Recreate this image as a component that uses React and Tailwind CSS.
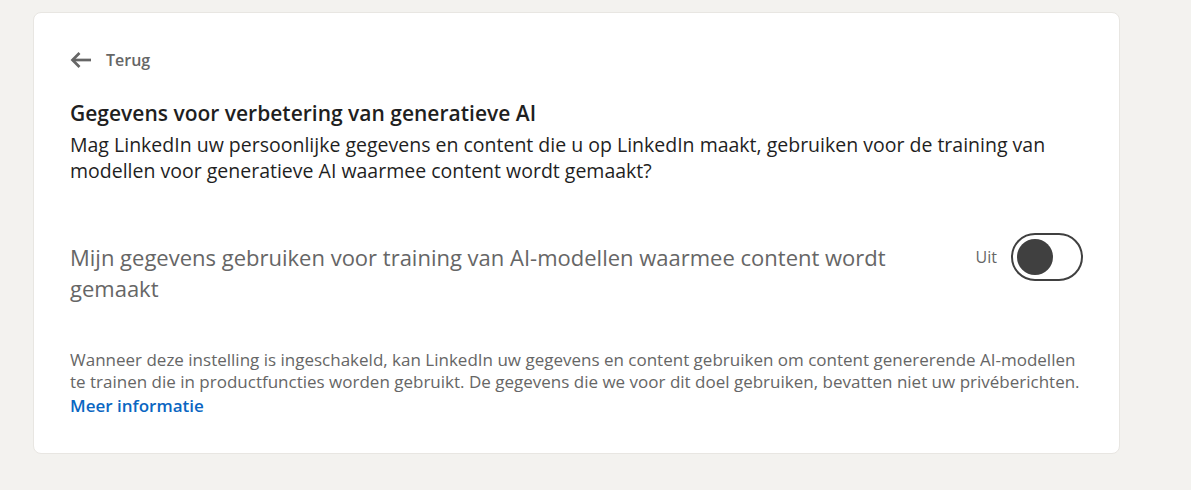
export default function App() {
    return (
        <div className="min-h-[490px] w-[1191px] bg-[#f3f2ef] pt-3 pl-[33px]" style={{ fontFamily: '"Open Sans", sans-serif' }}>
            <div className="w-[1087px] rounded-lg border border-[#e8e6e2] bg-white px-9 pt-[35px] pb-[34px]">
                <button className="flex items-center gap-[14px] text-[16px] font-semibold leading-6 text-[#666666]">
                    <svg width="22" height="18" viewBox="0 0 22 18" fill="none" stroke="#666666" strokeWidth="2.7" strokeLinejoin="miter">
                        <path d="M2.5 9 H21" />
                        <path d="M9.5 2 L2.5 9 L9.5 16" />
                    </svg>
                    Terug
                </button>

                <h2 className="mt-[26px] text-[21px] font-semibold leading-[30px] text-[#1f1f1f]">
                    Gegevens voor verbetering van generatieve AI
                </h2>
                <p className="mt-1 text-[19.5px] leading-[26px] text-[#1f1f1f]">
                    Mag LinkedIn uw persoonlijke gegevens en content die u op LinkedIn maakt, gebruiken voor de training van
                    modellen voor generatieve AI waarmee content wordt gemaakt?
                </p>

                <div className="mt-[49px] flex items-start justify-between">
                    <p className="mt-[9px] w-[880px] text-[22px] leading-[31px] text-[#666666]">
                        Mijn gegevens gebruiken voor training van AI-modellen waarmee content wordt gemaakt
                    </p>
                    <div className="flex items-center gap-[14px]">
                        <span className="text-[16px] text-[#666666]">Uit</span>
                        <button className="flex h-12 w-[72px] items-center rounded-full border-2 border-[#404040] px-1">
                            <span className="h-9 w-9 rounded-full bg-[#404040]" />
                        </button>
                    </div>
                </div>

                <div className="mt-[45px] text-[17px] leading-[22px] text-[#666666]">
                    <p>
                        Wanneer deze instelling is ingeschakeld, kan LinkedIn uw gegevens en content gebruiken om content genererende AI-modellen
                        te trainen die in productfuncties worden gebruikt. De gegevens die we voor dit doel gebruiken, bevatten niet uw privéberichten.
                    </p>
                    <a href="#" className="block font-semibold leading-[26px] text-[#0a66c2]">Meer informatie</a>
                </div>
            </div>
        </div>
    );
}
